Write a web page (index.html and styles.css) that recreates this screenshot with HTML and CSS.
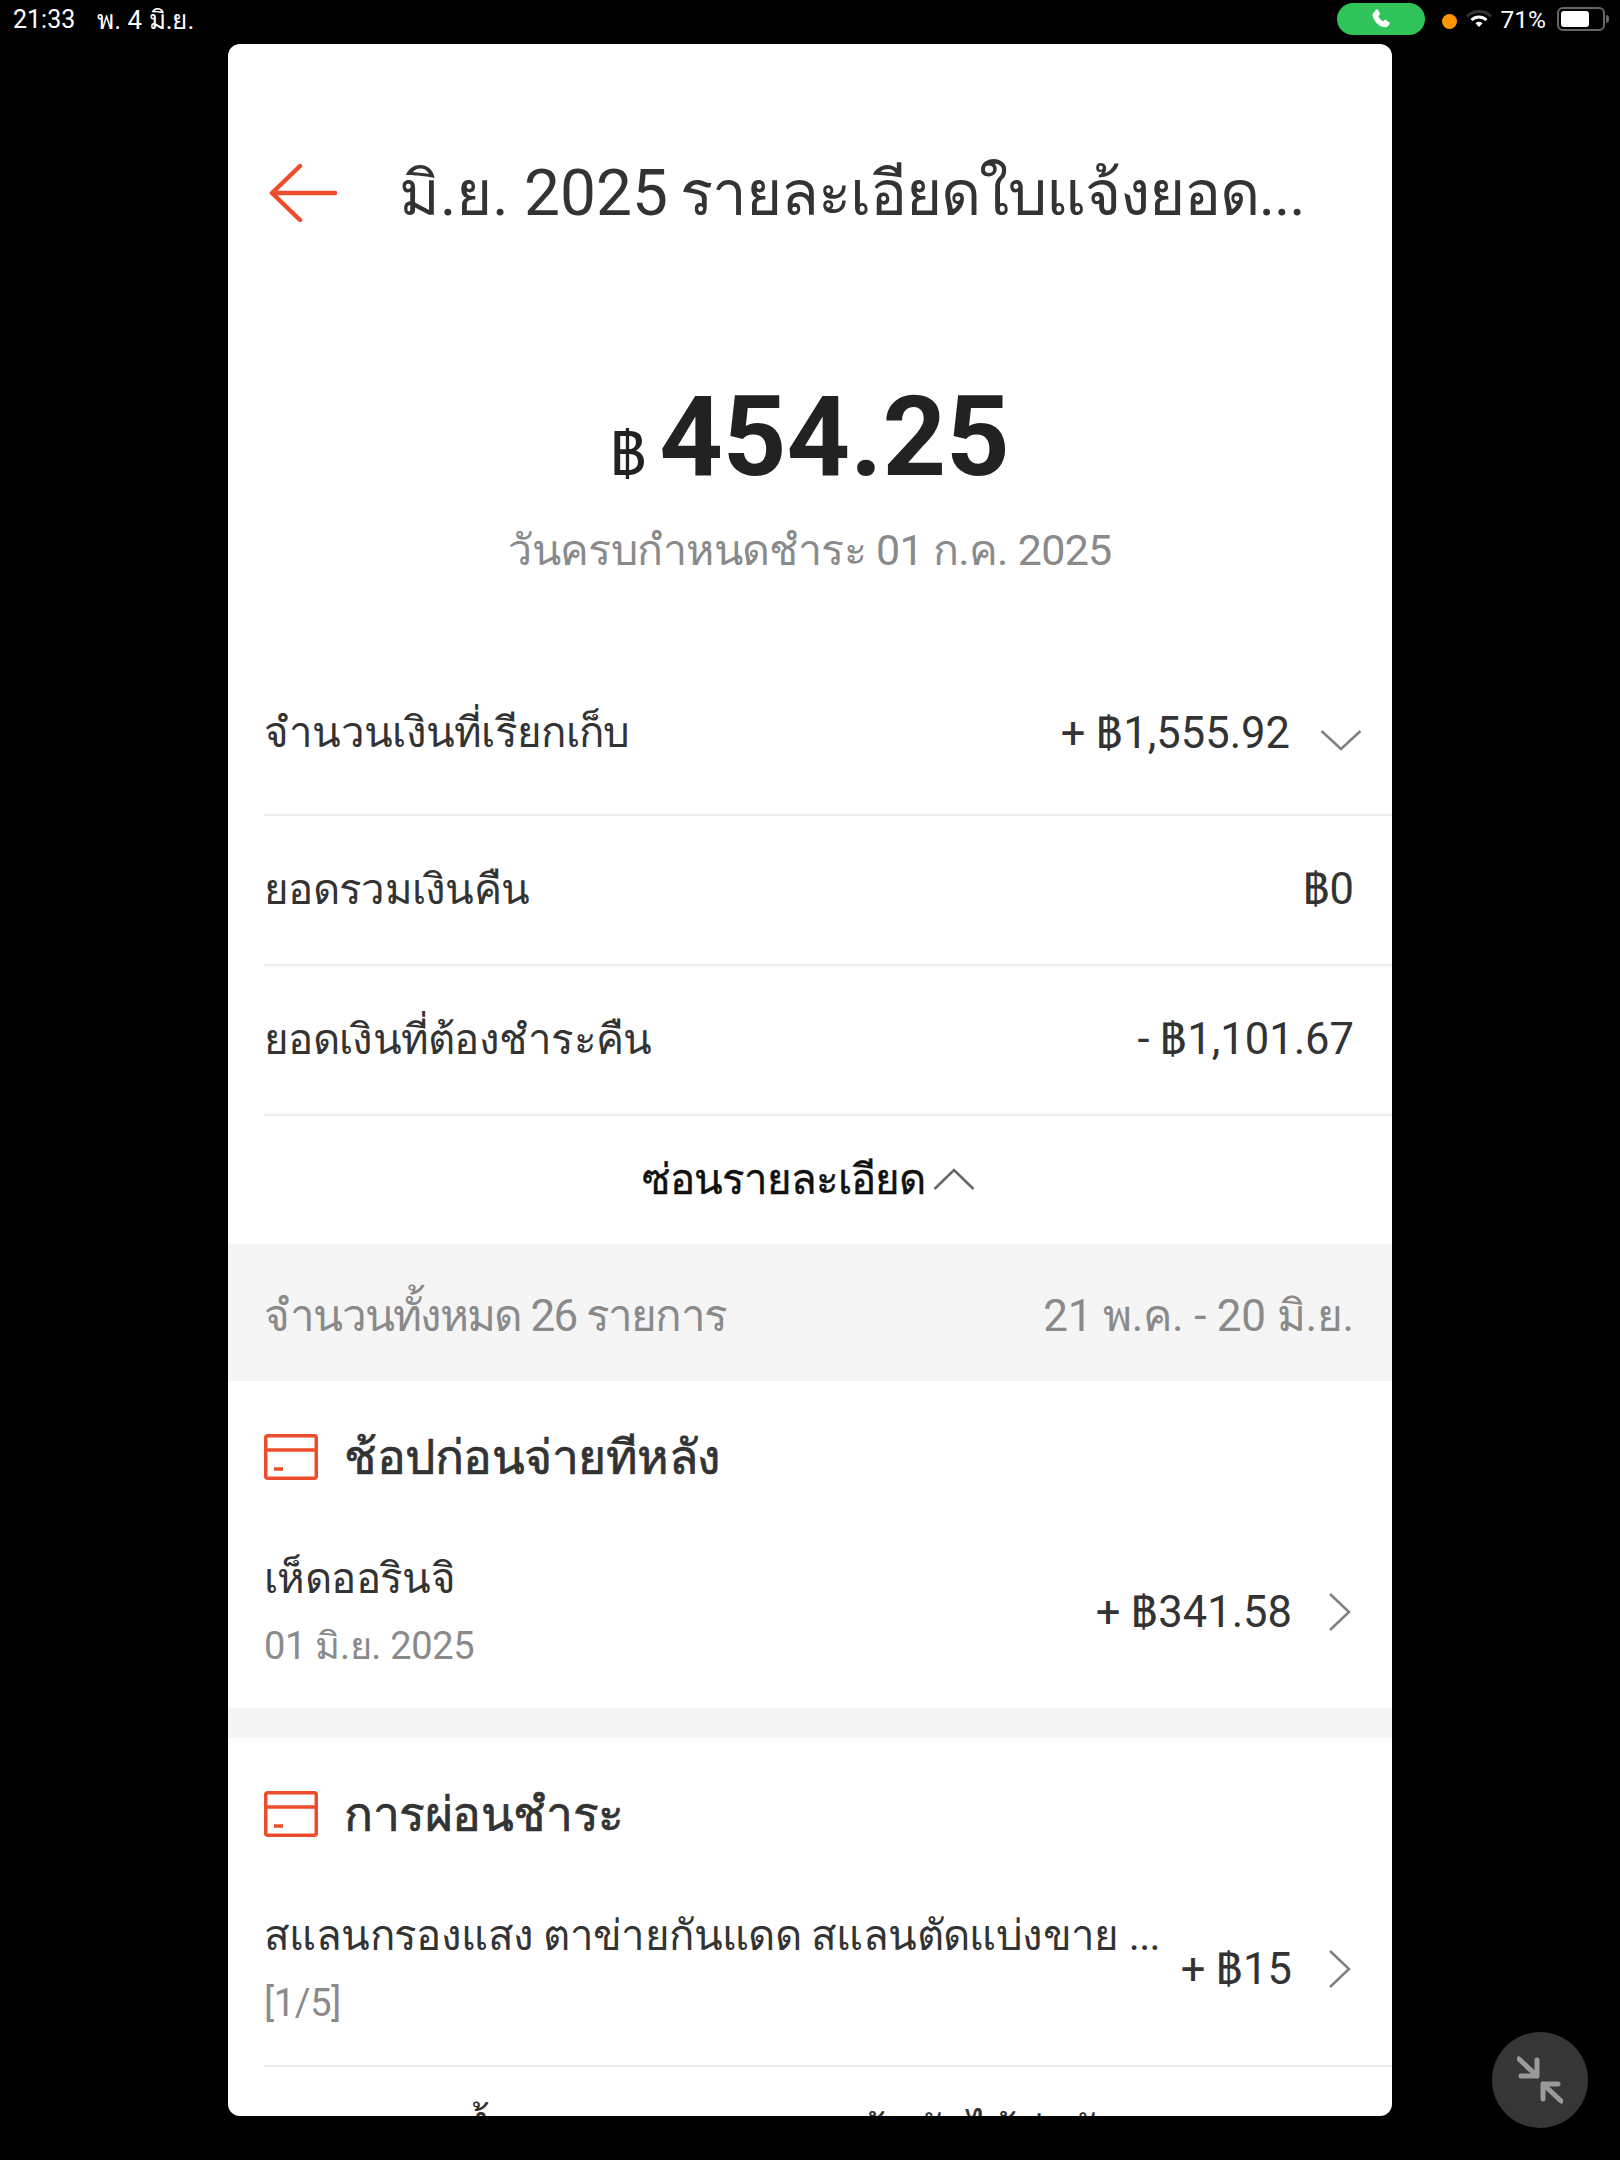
FILE: index.html
```html
<!DOCTYPE html>
<html lang="th">
<head>
  <meta charset="UTF-8">
  <meta name="viewport" content="width=device-width, initial-scale=1.0">
  <title>รายละเอียดใบแจ้งยอด</title>
  <link rel="stylesheet" href="styles.css">
</head>
<body>

  <div class="statusBar">
    <div class="statusLeft">
      <span class="clock">21:33</span>
      <span class="date">พ. 4 มิ.ย.</span>
    </div>
    <div class="statusRight">
      <span class="callPill">
        <svg width="22" height="22" viewBox="0 0 24 24"><path fill="#fff" d="M6.600 1.600c.8-.5 1.700-.3 2.200.5l1.900 3.300c.4.700.3 1.500-.3 2l-1.300 1.200c.7 2.400 2.700 4.600 5.200 5.800l1.400-1.100c.6-.5 1.400-.5 2 0l3.100 2.300c.8.600.9 1.700.2 2.400l-1.600 1.900c-1 1.100-2.500 1.500-3.900 1C9.700 20.200 4.500 14.700 2.900 8.700c-.4-1.500.1-3 1.300-3.900z"/></svg>
      </span>
      <span class="orangeDot"></span>
      <svg class="wifi" width="28" height="20" viewBox="0 0 28 20"><path d="M2 7.500a17 17 0 0 1 24 0" fill="none" stroke="#333" stroke-width="3"/><path d="M6.500 11a11 11 0 0 1 15 0" fill="none" stroke="#fff" stroke-width="3"/><path d="M10.500 14.200a5.500 5.500 0 0 1 7 0L14 18z" fill="#fff"/></svg>
      <span class="batteryText">71%</span>
      <span class="battery"><span class="batteryFill"></span></span>
      <span class="batteryTip"></span>
    </div>
  </div>

  <div class="card">
    <div class="header">
      <svg class="backIcon" width="68" height="58" viewBox="0 0 68 58"><path d="M66 29H3M31 2 3 29l28 27" fill="none" stroke="#ee4d2d" stroke-width="4.500" stroke-linecap="round" stroke-linejoin="round"/></svg>
      <div class="title">มิ.ย. <span class="titleNum">2025</span> <span class="titleRest">รายละเอียดใบแจ้งยอด...</span></div>
    </div>

    <div class="amountBox">
      <div class="amount"><span class="baht">฿</span>454.25</div>
      <div class="dueDate">วันครบกำหนดชำระ 01 ก.ค. 2025</div>
    </div>

    <div class="detailRow firstRow">
      <span class="label">จำนวนเงินที่เรียกเก็บ</span>
      <span class="value rowRight">+ ฿1,555.92
        <svg class="downIcon" width="42" height="22" viewBox="0 0 42 22"><path d="M1.500 2 21 20 40.500 2" fill="none" stroke="#808080" stroke-width="2.500"/></svg>
      </span>
    </div>
    <div class="detailRow">
      <span class="label">ยอดรวมเงินคืน</span>
      <span class="value">฿0</span>
    </div>
    <div class="detailRow">
      <span class="label">ยอดเงินที่ต้องชำระคืน</span>
      <span class="value">- ฿1,101.67</span>
    </div>

    <div class="toggleRow">
      <span>ซ่อนรายละเอียด</span>
      <svg width="42" height="24" viewBox="0 0 42 24"><path d="M1.500 22 21 3 40.500 22" fill="none" stroke="#666" stroke-width="2.500"/></svg>
    </div>

    <div class="summaryBand">
      <span class="summaryCount">จำนวนทั้งหมด 26 รายการ</span>
      <span class="summaryRange">21 พ.ค. - 20 มิ.ย.</span>
    </div>

    <div class="section">
      <div class="sectionHead">
        <svg class="cardIcon" width="54" height="46" viewBox="0 0 54 46"><rect x="1.750" y="1.750" width="50.500" height="42.500" rx="2" fill="none" stroke="#ee4d2d" stroke-width="3.500"/><path d="M2 16h50M10 35h9" stroke="#ee4d2d" stroke-width="3.500"/></svg>
        <span>ช้อปก่อนจ่ายทีหลัง</span>
      </div>
      <div class="itemRow">
        <div class="itemText">
          <div class="itemName">เห็ดออรินจิ</div>
          <div class="itemSub">01 มิ.ย. 2025</div>
        </div>
        <span class="itemPrice">+ ฿341.58</span>
        <svg class="nextIcon" width="24" height="40" viewBox="0 0 24 40"><path d="M2 2 21 20 2 38" fill="none" stroke="#808080" stroke-width="2.500"/></svg>
      </div>
    </div>

    <div class="gapBand"></div>

    <div class="section">
      <div class="sectionHead">
        <svg class="cardIcon" width="54" height="46" viewBox="0 0 54 46"><rect x="1.750" y="1.750" width="50.500" height="42.500" rx="2" fill="none" stroke="#ee4d2d" stroke-width="3.500"/><path d="M2 16h50M10 35h9" stroke="#ee4d2d" stroke-width="3.500"/></svg>
        <span>การผ่อนชำระ</span>
      </div>
      <div class="itemRow">
        <div class="itemText">
          <div class="itemName">สแลนกรองแสง ตาข่ายกันแดด สแลนตัดแบ่งขาย ...</div>
          <div class="itemSub">[1/5]</div>
        </div>
        <span class="itemPrice">+ ฿15</span>
        <svg class="nextIcon" width="24" height="40" viewBox="0 0 24 40"><path d="M2 2 21 20 2 38" fill="none" stroke="#808080" stroke-width="2.500"/></svg>
      </div>
      <div class="itemRow nextItem">
        <div class="itemName">สแลนกรองน้ำ นาพรางแสงกลางแจ้ง กันไม้ท่วมัง</div>
      </div>
    </div>
  </div>

  <div class="floatBtn">
    <svg width="46" height="48" viewBox="0 0 46 48"><path d="M2 3 20 20M20 4V20H4M44 45 26 28M41 28H26V43" fill="none" stroke="#9a9a9a" stroke-width="5" stroke-linecap="round" stroke-linejoin="round"/></svg>
  </div>

</body>
</html>
```

FILE: styles.css
```css
body {
  margin: 0;
  height: 2160px;
  overflow: hidden;
  background-color: #000;
  font-family: Roboto, "Noto Sans", sans-serif;
  color: #222;
  display: flex;
  flex-direction: column;
  align-items: center;
}
.statusBar {
  width: 100%;
  height: 44px;
  box-sizing: border-box;
  padding: 0 11px 6px 13px;
  display: flex;
  justify-content: space-between;
  align-items: center;
  color: #fff;
  font-size: 24px;
}
.statusLeft {
  display: flex;
  align-items: center;
  gap: 22px;
}
.clock {
  font-size: 25px;
}
.date {
  font-size: 26px;
}
.statusRight {
  display: flex;
  align-items: center;
  gap: 10px;
}
.callPill {
  width: 88px;
  height: 32px;
  border-radius: 16px;
  background-color: #30c35a;
  display: flex;
  justify-content: center;
  align-items: center;
  margin-right: 7px;
}
.orangeDot {
  width: 15px;
  height: 15px;
  margin-top: 4px;
  border-radius: 50%;
  background-color: #ff9500;
}
.wifi {
  margin: 0 -2px;
}
.batteryText {
  font-size: 24.500px;
}
.battery {
  width: 48px;
  height: 24px;
  box-sizing: border-box;
  border: 2px solid #666;
  border-radius: 6px;
  padding: 2px;
  margin-left: 1px;
  display: flex;
}
.batteryFill {
  width: 28px;
  background-color: #fff;
  border-radius: 3px;
}
.batteryTip {
  width: 3px;
  height: 8px;
  margin-left: -9px;
  background-color: #666;
  border-radius: 0 3px 3px 0;
}
.card {
  width: 1164px;
  height: 2072px;
  background-color: #fff;
  border-radius: 12px;
  overflow: hidden;
}
.header {
  height: 194px;
  padding: 104px 0 0 41px;
  box-sizing: border-box;
  display: flex;
  align-items: center;
  gap: 62px;
}
.backIcon {
  flex-shrink: 0;
}
.title {
  font-size: 62px;
  white-space: nowrap;
  color: #333;
}
.titleNum {
  font-size: 64px;
}
.titleRest {
  margin-left: -3px;
  letter-spacing: -1.100px;
}
.amountBox {
  height: 412px;
  box-sizing: border-box;
  padding-top: 138px;
  text-align: center;
}
.amount {
  font-size: 111px;
  line-height: 122px;
  font-weight: 700;
  color: #222;
}
.baht {
  font-size: 60px;
  font-weight: 400;
  margin-right: 12px;
}
.dueDate {
  margin-top: 4px;
  font-size: 43px;
  line-height: 60px;
  letter-spacing: -0.7px;
  color: #8a8a8a;
}
.detailRow {
  margin-left: 36px;
  padding: 0 38px 3px 0;
  height: 150px;
  box-sizing: border-box;
  border-bottom: 2px solid #eee;
  display: flex;
  justify-content: space-between;
  align-items: center;
  color: #333;
}
.firstRow {
  height: 166px;
  padding: 0 30px 0 0;
}
.label {
  font-size: 42px;
  letter-spacing: -0.7px;
}
.value {
  font-size: 43.500px;
}
.rowRight {
  display: flex;
  align-items: center;
  gap: 30px;
}
.downIcon {
  margin-top: 16px;
}
.toggleRow {
  height: 128px;
  box-sizing: border-box;
  padding: 0 4px 3px 0;
  display: flex;
  justify-content: center;
  align-items: center;
  gap: 8px;
  font-size: 42px;
  letter-spacing: -1px;
  -webkit-text-stroke: 0.4px #111;
  color: #111;
}
.summaryBand {
  height: 137px;
  box-sizing: border-box;
  padding: 5px 38px 0 36px;
  background-color: #f5f5f5;
  display: flex;
  justify-content: space-between;
  align-items: center;
  font-size: 44px;
  color: #8a8a8a;
}
.summaryCount {
  letter-spacing: -1.750px;
}
.summaryRange {
  letter-spacing: -0.2px;
}
.gapBand {
  height: 30px;
  background-color: #f5f5f5;
}
.sectionHead {
  height: 154px;
  box-sizing: border-box;
  padding: 0 0 2px 36px;
  display: flex;
  align-items: center;
  gap: 26px;
  font-size: 48px;
  letter-spacing: -0.5px;
  -webkit-text-stroke: 0.7px #333;
  color: #333;
}
.itemRow {
  height: 173px;
  margin-left: 36px;
  padding: 0 40px 20px 0;
  box-sizing: border-box;
  display: flex;
  align-items: center;
}
.itemText {
  flex: 1;
  min-width: 0;
}
.itemName {
  font-size: 42px;
  line-height: 60px;
  letter-spacing: -0.6px;
  white-space: nowrap;
  color: #333;
}
.itemSub {
  margin-top: 8px;
  font-size: 38px;
  line-height: 58px;
  letter-spacing: -0.3px;
  color: #8a8a8a;
}
.itemPrice {
  font-size: 43.500px;
  color: #333;
  margin-right: 36px;
  white-space: nowrap;
}
.nextItem {
  border-top: 2px solid #eee;
  padding-top: 35px;
  align-items: flex-start;
}
.floatBtn {
  position: absolute;
  left: 1492px;
  top: 2032px;
  width: 96px;
  height: 96px;
  border-radius: 50%;
  background-color: #363636;
  display: flex;
  justify-content: center;
  align-items: center;
}
```
